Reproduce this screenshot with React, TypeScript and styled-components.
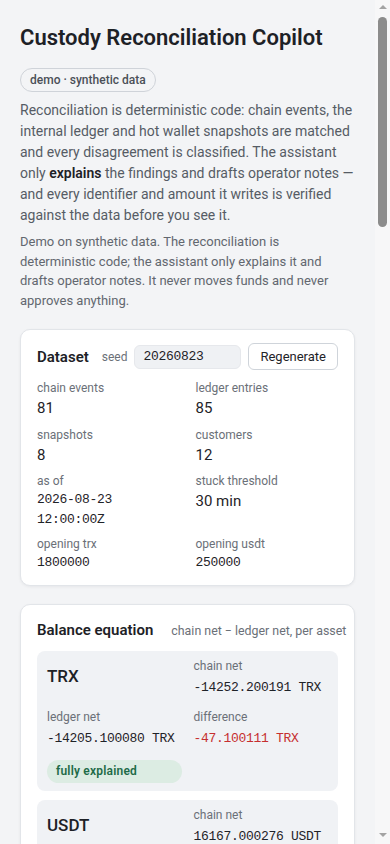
import { FC } from "react";
import styled, { createGlobalStyle } from "styled-components";

const GlobalStyle = createGlobalStyle`
	html, body {
		margin: 0;
		padding: 0;
		background: #f3f4f6;
	}
	body {
		font-family: Roboto, "Liberation Sans", sans-serif;
		color: #1f2328;
		line-height: 1.5;
	}
	* {
		box-sizing: border-box;
	}
`;

const MONO = `"Liberation Mono", "DejaVu Sans Mono", monospace`;

type Stat = { label: string; value: string; mono?: boolean };

const STATS: Stat[] = [
	{ label: "chain events", value: "81" },
	{ label: "ledger entries", value: "85" },
	{ label: "snapshots", value: "8" },
	{ label: "customers", value: "12" },
	{ label: "as of", value: "2026-08-23 12:00:00Z", mono: true },
	{ label: "stuck threshold", value: "30 min" },
	{ label: "opening trx", value: "1800000", mono: true },
	{ label: "opening usdt", value: "250000", mono: true },
];

type Asset = { name: string; chain: string; ledger: string; diff: string; status: string };

const ASSETS: Asset[] = [
	{
		name: "TRX",
		chain: "-14252.200191 TRX",
		ledger: "-14205.100080 TRX",
		diff: "-47.100111 TRX",
		status: "fully explained",
	},
	{
		name: "USDT",
		chain: "16167.000276 USDT",
		ledger: "16120.000276 USDT",
		diff: "47.000000 USDT",
		status: "fully explained",
	},
];

type Finding = { kind: string; id: string; amount: string; note: string };

const FINDINGS: Finding[] = [
	{ kind: "unmatched chain event", id: "ev_0017", amount: "12.500000 TRX", note: "deposit without a ledger credit" },
	{ kind: "stuck withdrawal", id: "wd_0042", amount: "-3000.000000 USDT", note: "pending for 47 min, threshold 30 min" },
	{ kind: "duplicate ledger entry", id: "le_0063", amount: "250.000000 USDT", note: "same reference posted twice" },
	{ kind: "fee mismatch", id: "ev_0029", amount: "-1.100111 TRX", note: "chain fee differs from booked fee" },
	{ kind: "unmatched ledger entry", id: "le_0071", amount: "-58.500000 TRX", note: "no chain event for this debit" },
	{ kind: "amount mismatch", id: "ev_0054", amount: "-203.000000 USDT", note: "ledger books 250.000000 USDT" },
	{ kind: "snapshot drift", id: "sn_0005", amount: "-0.000276 USDT", note: "hot wallet below computed balance" },
	{ kind: "stuck withdrawal", id: "wd_0048", amount: "-1200.000000 TRX", note: "broadcast, not confirmed" },
	{ kind: "unmatched chain event", id: "ev_0066", amount: "406.000000 USDT", note: "deposit to unknown address" },
	{ kind: "fee mismatch", id: "ev_0073", amount: "-0.500000 TRX", note: "energy cost not booked" },
	{ kind: "duplicate ledger entry", id: "le_0080", amount: "75.000000 TRX", note: "retry posted a second credit" },
	{ kind: "amount mismatch", id: "ev_0078", amount: "-12.000000 USDT", note: "rounding on conversion" },
];

const NOTES = [
	"ev_0017 — a deposit of 12.500000 TRX arrived on chain with no matching ledger credit. Credit the customer after confirming the sender address.",
	"wd_0042 — withdrawal of 3000.000000 USDT has been pending for 47 min, over the 30 min threshold. Check the broadcast status before any retry.",
	"le_0063 — the same reference was posted twice for 250.000000 USDT. Reverse one entry.",
	"ev_0029 — chain fee differs from the booked fee by 1.100111 TRX. Book the difference to fees.",
];

const App: FC = () => {
	return (
		<>
			<GlobalStyle />
			<Page>
				<Title>Custody Reconciliation Copilot</Title>
				<Badge>demo · synthetic data</Badge>
				<Lead>
					Reconciliation is deterministic code: chain events, the internal ledger and hot wallet snapshots
					are matched and every disagreement is classified. The assistant only <strong>explains</strong> the
					findings and drafts operator notes — and every identifier and amount it writes is verified against
					the data before you see it.
				</Lead>
				<Note>
					Demo on synthetic data. The reconciliation is deterministic code; the assistant only explains it and
					drafts operator notes. It never moves funds and never approves anything.
				</Note>

				<Cards>
					<Card>
						<DatasetHead>
							<CardTitle>Dataset</CardTitle>
							<SeedLabel>seed</SeedLabel>
							<SeedInput readOnly value="20260823" />
							<Button>Regenerate</Button>
						</DatasetHead>
						<StatGrid>
							{STATS.map((s) => (
								<div key={s.label}>
									<Label>{s.label}</Label>
									<StatValue $mono={s.mono}>{s.value}</StatValue>
								</div>
							))}
						</StatGrid>
					</Card>

					<Card>
						<CardHead>
							<CardTitle>Balance equation</CardTitle>
							<Hint>chain net − ledger net, per asset</Hint>
						</CardHead>
						<AssetList>
							{ASSETS.map((a) => (
								<AssetBox key={a.name}>
									<AssetName>{a.name}</AssetName>
									<div>
										<Label>chain net</Label>
										<Amount>{a.chain}</Amount>
									</div>
									<div>
										<Label>ledger net</Label>
										<Amount>{a.ledger}</Amount>
									</div>
									<div>
										<Label>difference</Label>
										<Amount $tone="bad">{a.diff}</Amount>
									</div>
									<Pill>{a.status}</Pill>
								</AssetBox>
							))}
						</AssetList>
					</Card>

					<Card>
						<CardHead>
							<CardTitle>Findings</CardTitle>
							<Hint>{FINDINGS.length} classified</Hint>
						</CardHead>
						<FindingList>
							{FINDINGS.map((f) => (
								<FindingRow key={f.id}>
									<FindingTop>
										<Kind>{f.kind}</Kind>
										<Ref>{f.id}</Ref>
									</FindingTop>
									<Amount $tone={f.amount.startsWith("-") ? "bad" : undefined}>{f.amount}</Amount>
									<FindingNote>{f.note}</FindingNote>
								</FindingRow>
							))}
						</FindingList>
					</Card>

					<Card>
						<CardHead>
							<CardTitle>Operator notes</CardTitle>
							<Hint>draft · verified</Hint>
						</CardHead>
						<NoteList>
							{NOTES.map((n) => (
								<NoteItem key={n}>{n}</NoteItem>
							))}
						</NoteList>
						<Actions>
							<Button>Draft notes</Button>
							<Button>Copy</Button>
						</Actions>
					</Card>
				</Cards>
				<Footer>Synthetic data only. Nothing here touches real funds.</Footer>
			</Page>

			{/* classic page scrollbar, as in the screenshot */}
			<ScrollTrack>
				<ArrowUp />
				<Thumb />
				<ArrowDown />
			</ScrollTrack>
		</>
	);
};

export default App;

const Page = styled.main`
	width: 375px;
	padding: 24px 20px 40px;
`;

const Title = styled.h1`
	margin: 0 0 15px;
	font-size: 22px;
	line-height: 28px;
	font-weight: 600;
	color: #1d2126;
`;

const Badge = styled.span`
	display: inline-block;
	padding: 3px 9px;
	border: 1px solid #cfd3d9;
	border-radius: 999px;
	font-size: 12px;
	line-height: 16px;
	font-weight: 500;
	color: #4b5058;
`;

const Lead = styled.p`
	margin: 8px 0 0;
	font-size: 14px;
	line-height: 21px;
	color: #565c65;

	strong {
		color: #1d2126;
		font-weight: 600;
	}
`;

const Note = styled.p`
	margin: 6px 0 0;
	font-size: 13px;
	line-height: 19.5px;
	color: #62676f;
`;

const Cards = styled.div`
	margin-top: 19px;
	display: flex;
	flex-direction: column;
	gap: 18px;
`;

const Card = styled.section`
	background: #ffffff;
	border: 1px solid #e2e5e9;
	border-radius: 10px;
	padding: 13px 16px 12px;
	box-shadow: 0 1px 3px rgba(16, 24, 40, 0.06);
`;

const CardHead = styled.div`
	display: flex;
	align-items: baseline;
	justify-content: space-between;
	gap: 12px;
	padding-top: 1px;
	margin-bottom: 10px;
`;

const DatasetHead = styled.div`
	display: flex;
	align-items: center;
	gap: 7px;
`;

const CardTitle = styled.h2`
	margin: 0 6px 0 0;
	font-size: 15px;
	line-height: 22px;
	font-weight: 600;
	color: #1d2126;
	white-space: nowrap;
`;

const Hint = styled.span`
	font-size: 12.4px;
	color: #6b7078;
	white-space: nowrap;
`;

const SeedLabel = styled.span`
	font-size: 12px;
	color: #6b7078;
`;

const SeedInput = styled.input`
	flex: 1;
	min-width: 0;
	height: 24px;
	padding: 0 8px;
	border: 1px solid #e6e8ec;
	border-radius: 6px;
	background: #eff1f4;
	font-family: ${MONO};
	font-size: 13px;
	letter-spacing: -0.3px;
	color: #1f2328;
	outline: none;
`;

const Button = styled.button`
	height: 27px;
	padding: 0 11px;
	border: 1px solid #cfd4da;
	border-radius: 6px;
	background: #ffffff;
	font-family: Roboto, "Liberation Sans", sans-serif;
	font-size: 13px;
	color: #1f2328;
	cursor: pointer;
`;

const StatGrid = styled.div`
	margin-top: 9px;
	display: grid;
	grid-template-columns: 1fr 1fr;
	column-gap: 16px;
	row-gap: 6px;
`;

const Label = styled.div`
	font-size: 12px;
	line-height: 18px;
	color: #6b7078;
`;

const StatValue = styled.div<{ $mono?: boolean }>`
	font-family: ${(p) => (p.$mono ? MONO : `Roboto, "Liberation Sans", sans-serif`)};
	font-size: ${(p) => (p.$mono ? "13px" : "15px")};
	letter-spacing: ${(p) => (p.$mono ? "-0.3px" : "normal")};
	line-height: ${(p) => (p.$mono ? "19.5px" : "22.5px")};
	color: #1f2328;
`;

const AssetList = styled.div`
	display: flex;
	flex-direction: column;
	gap: 9px;
`;

const AssetBox = styled.div`
	display: grid;
	grid-template-columns: 1fr 1fr;
	column-gap: 12px;
	row-gap: 11px;
	padding: 6px 10px 8px;
	border-radius: 8px;
	background: #f0f2f5;
`;

const AssetName = styled.div`
	align-self: center;
	font-size: 17px;
	font-weight: 500;
	color: #1d2126;
`;

const Amount = styled.div<{ $tone?: "bad" }>`
	margin-top: 3px;
	font-family: ${MONO};
	font-size: 13px;
	letter-spacing: -0.3px;
	line-height: 19.5px;
	color: ${(p) => (p.$tone === "bad" ? "#c62f2f" : "#1f2328")};
	white-space: nowrap;
`;

const Pill = styled.div`
	align-self: start;
	height: 23px;
	padding: 0 9px;
	border-radius: 12px;
	background: #dcece3;
	font-size: 12px;
	line-height: 23px;
	font-weight: 600;
	letter-spacing: 0.2px;
	color: #1e6b48;
`;

const FindingList = styled.div`
	display: flex;
	flex-direction: column;
	gap: 8px;
`;

const FindingRow = styled.div`
	padding: 8px 10px;
	border-radius: 8px;
	background: #f0f2f5;
`;

const FindingTop = styled.div`
	display: flex;
	justify-content: space-between;
	align-items: baseline;
`;

const Kind = styled.span`
	font-size: 13px;
	font-weight: 600;
	color: #1d2126;
`;

const Ref = styled.span`
	font-family: ${MONO};
	font-size: 12px;
	color: #6b7078;
`;

const FindingNote = styled.div`
	margin-top: 2px;
	font-size: 12px;
	line-height: 18px;
	color: #6b7078;
`;

const NoteList = styled.ol`
	margin: 0;
	padding-left: 18px;
	display: flex;
	flex-direction: column;
	gap: 10px;
`;

const NoteItem = styled.li`
	font-size: 13px;
	line-height: 19.5px;
	color: #3f444b;
`;

const Actions = styled.div`
	margin-top: 14px;
	display: flex;
	gap: 8px;
`;

const Footer = styled.p`
	margin: 24px 0 0;
	font-size: 12px;
	color: #7a7f87;
	text-align: center;
`;

const ScrollTrack = styled.div`
	position: fixed;
	top: 0;
	right: 0;
	bottom: 0;
	width: 15px;
	background: #f7f7f8;
	display: flex;
	flex-direction: column;
	align-items: center;
	padding: 5px 0;
`;

const ArrowUp = styled.div`
	width: 0;
	height: 0;
	border-left: 4px solid transparent;
	border-right: 4px solid transparent;
	border-bottom: 4px solid #a3a3a3;
	margin-bottom: 8px;
`;

const ArrowDown = styled.div`
	width: 0;
	height: 0;
	border-left: 4px solid transparent;
	border-right: 4px solid transparent;
	border-top: 4px solid #a3a3a3;
	margin-top: auto;
	margin-bottom: 2px;
`;

const Thumb = styled.div`
	width: 9px;
	height: 210px;
	border-radius: 5px;
	background: #8c8c8c;
`;
